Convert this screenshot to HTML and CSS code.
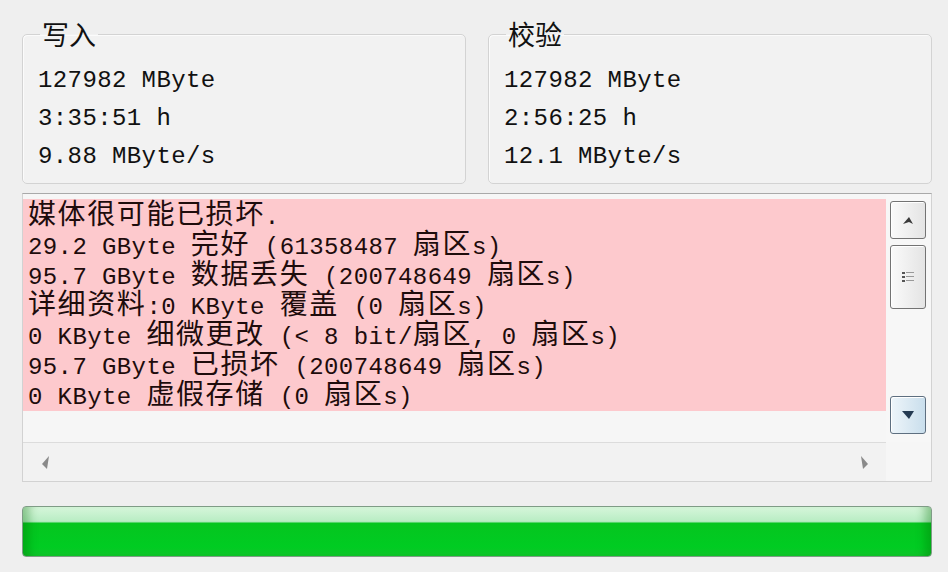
FILE: index.html
```html
<!DOCTYPE html>
<html lang="zh-CN">
<head>
  <meta charset="UTF-8" />
  <title>H2testw</title>
  <link rel="stylesheet" href="styles.css">
</head>
<body>
  <div class="window">

    <div class="groups">
      <fieldset class="group">
        <legend>写入</legend>
        <div class="val">127982 MByte</div>
        <div class="val">3:35:51 h</div>
        <div class="val">9.88 MByte/s</div>
      </fieldset>
      <fieldset class="group">
        <legend>校验</legend>
        <div class="val">127982 MByte</div>
        <div class="val">2:56:25 h</div>
        <div class="val">12.1 MByte/s</div>
      </fieldset>
    </div>

    <div class="report">
      <div class="log-area">
        <div class="log">
          <div class="line"><span class="z">媒体很可能已损坏</span>.</div>
          <div class="line">29.2 GByte <span class="z">完好</span> (61358487 <span class="z">扇区</span>s)</div>
          <div class="line">95.7 GByte <span class="z">数据丢失</span> (200748649 <span class="z">扇区</span>s)</div>
          <div class="line"><span class="z">详细资料</span>:0 KByte <span class="z">覆盖</span> (0 <span class="z">扇区</span>s)</div>
          <div class="line">0 KByte <span class="z">细微更改</span> (&lt; 8 bit/<span class="z">扇区</span>, 0 <span class="z">扇区</span>s)</div>
          <div class="line">95.7 GByte <span class="z">已损坏</span> (200748649 <span class="z">扇区</span>s)</div>
          <div class="line">0 KByte <span class="z">虚假存储</span> (0 <span class="z">扇区</span>s)</div>
        </div>
      </div>

      <div class="vscroll">
        <div class="sb-btn">
          <svg width="10" height="7" viewBox="0 0 10 7"><polygon points="0,7 6,0 10,7 6,5" fill="#3a3a3a"/></svg>
        </div>
        <div class="sb-btn sb-thumb">
          <svg width="12" height="12" viewBox="0 0 12 12">
            <rect x="0" y="1" width="3" height="2" fill="#555"/><rect x="4" y="1" width="8" height="1" fill="#999"/>
            <rect x="0" y="5" width="3" height="2" fill="#555"/><rect x="4" y="5" width="8" height="1" fill="#999"/>
            <rect x="0" y="9" width="3" height="2" fill="#555"/><rect x="4" y="9" width="8" height="1" fill="#999"/>
          </svg>
        </div>
        <div class="sb-btn sb-down">
          <svg width="12" height="8" viewBox="0 0 12 8"><polygon points="0,0 12,0 7,8" fill="#243a52"/></svg>
        </div>
      </div>

      <div class="hscroll">
        <svg width="7" height="13" viewBox="0 0 7 13"><polygon points="7,0 0,8 5,13" fill="#8a8a8a"/></svg>
        <svg width="7" height="13" viewBox="0 0 7 13"><polygon points="0,0 7,8 2,13" fill="#8a8a8a"/></svg>
      </div>
      <div class="corner"></div>
    </div>

    <div class="progress"></div>

  </div>
</body>
</html>
```

FILE: styles.css
```css
body {
  margin: 0;
  background: #efefef;
  font-family: "Liberation Mono", "Noto Sans CJK SC", monospace;
  color: #111;
}
.window {
  padding: 20px 16px 0 22px;
}
.z {
  font-family: "Noto Sans CJK SC", sans-serif;
  font-size: 28px;
  line-height: 22px;
  letter-spacing: 1.6px;
}

/* group boxes */
.groups {
  display: flex;
  gap: 22px;
}
.group {
  flex: 1;
  margin: 0;
  min-width: 0;
  padding: 14px 15px 7px;
  border: 1px solid #d3d3d3;
  border-radius: 5px;
  background: #f2f2f2;
  box-shadow: inset 1px 1px 0 #fbfbfb;
}
.group legend {
  font-family: "Noto Sans CJK SC", sans-serif;
  font-size: 27px;
  line-height: 28px;
  padding: 0 2px;
  margin-left: 2px;
  color: #111;
}
.val {
  font-size: 24px;
  letter-spacing: 0.4px;
  line-height: 38px;
  white-space: nowrap;
}

/* report box */
.report {
  margin-top: 9px;
  display: grid;
  grid-template-columns: 1fr 45px;
  grid-template-rows: 248px 39px;
  border: 1px solid #d2d2d2;
  border-top-color: #a9a9a9;
  background: #f6f6f6;
}
.log-area {
  padding-top: 5px;
}
.log {
  height: 210px;
  padding: 2px 0 0 5px;
  background: #fdc9cd;
  color: #1e0c0c;
  font-size: 24px;
  letter-spacing: 0.4px;
  white-space: nowrap;
}
.line {
  height: 30px;
  line-height: 30px;
}
.vscroll {
  display: flex;
  flex-direction: column;
  padding: 7px 5px 8px 4px;
  background: #f7f7f7;
}
.sb-btn {
  height: 36px;
  border: 1px solid #737373;
  border-radius: 3px;
  background: linear-gradient(to right, #fafafa, #e4e4e4);
  box-shadow: inset 1px 1px 0 #fff;
  display: flex;
  align-items: center;
  justify-content: center;
}
.sb-thumb {
  margin-top: 6px;
  height: 62px;
}
.sb-down {
  margin-top: auto;
  border-color: #5e6f80;
  background: linear-gradient(to right, #eef5fa, #c9deec);
}
.hscroll {
  display: flex;
  justify-content: space-between;
  align-items: center;
  padding: 0 18px 0 19px;
  border-top: 1px solid #dcdcdc;
  background: #f2f2f2;
}
.corner {
  background: #f6f6f6;
}

/* progress bar */
.progress {
  margin-top: 24px;
  height: 49px;
  border: 1px solid #7f9c86;
  border-radius: 4px;
  background: linear-gradient(to bottom, #d6f6da 0, #b9edc4 14px, #a6e6b6 15px, #05c51f 16px, #00cc22 40px, #10c42a 100%);
  box-shadow: inset 14px 0 10px -8px rgba(0, 110, 0, 0.35), inset -14px 0 10px -8px rgba(0, 110, 0, 0.35);
}
```
